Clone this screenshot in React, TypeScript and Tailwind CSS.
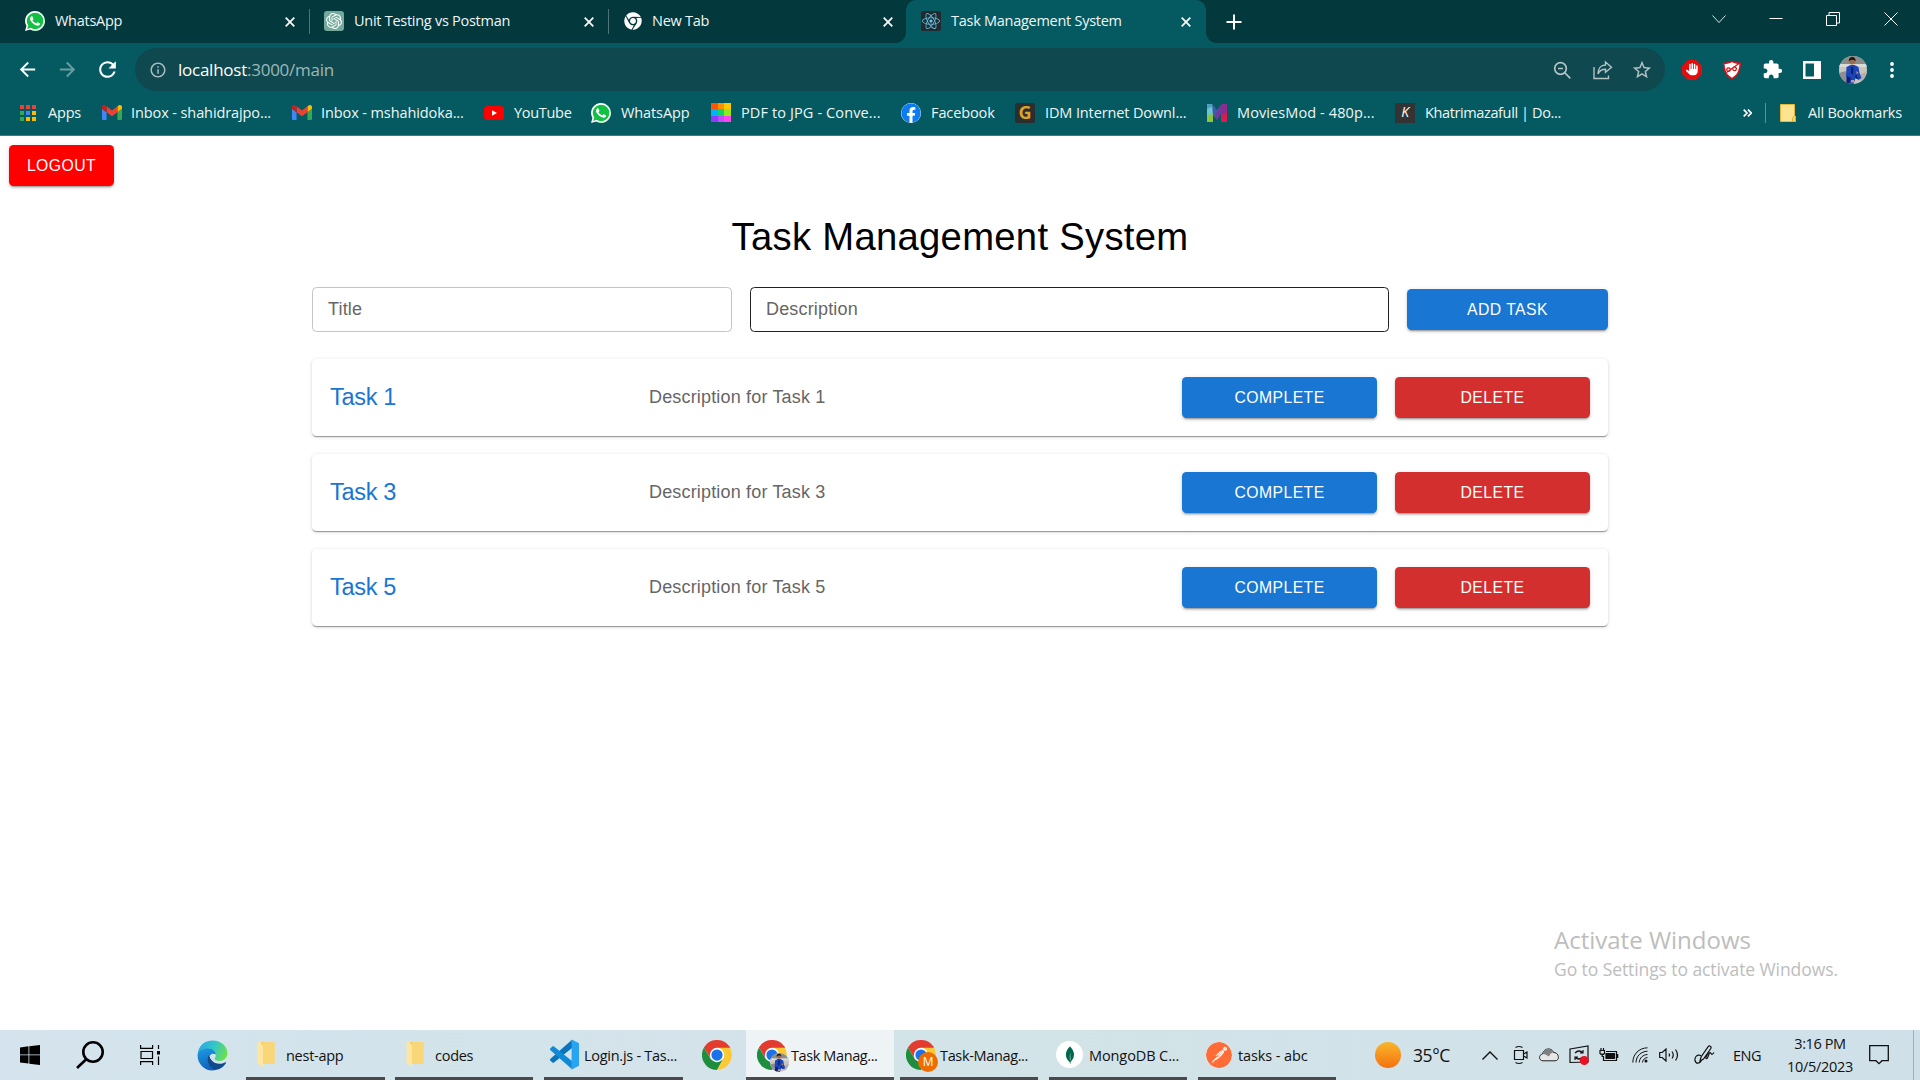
import type { ReactNode } from "react";
import { FaReact, FaChrome, FaFacebook } from "react-icons/fa";
import { FaHand } from "react-icons/fa6";
import { SiWhatsapp, SiOpenai, SiMongodb, SiPostman } from "react-icons/si";
import { MdArrowBack, MdArrowForward, MdExtension, MdInfoOutline, MdRefresh, MdStarBorder } from "react-icons/md";

/* ---------- logos ---------- */

function WhatsAppLogo() {
  return (
    <span className="grid size-5 shrink-0 place-items-center rounded-full bg-[#12c143]">
      <SiWhatsapp className="size-5 text-white" />
    </span>
  );
}

function GmailLogo() {
  return (
    <svg viewBox="0 0 24 18" className="h-[15px] w-5 shrink-0">
      <path d="M0 2.5V16.4C0 17.3.7 18 1.6 18H5.5V8.7L0 4.5z" fill="#4285f4" />
      <path d="M18.5 18h3.9c.9 0 1.6-.7 1.6-1.6V4.5l-5.5 4.2z" fill="#34a853" />
      <path d="M18.5 1.6v7.1L24 4.6V2.5c0-2-2.300-3.200-3.900-2z" fill="#fbbc04" />
      <path d="M5.500 8.700V1.600L12 6.500l6.500-4.900v7.100L12 13.600z" fill="#ea4335" />
      <path d="M0 2.500v2.100l5.500 4.100V1.600L3.900.5C2.300-.7 0 .5 0 2.500z" fill="#c5221f" />
    </svg>
  );
}

function AppsIcon() {
  const cells = ["bg-[#ea4335]", "bg-[#ea4335]", "bg-[#ea4335]", "bg-[#34a853]", "bg-[#4285f4]", "bg-[#fbbc04]", "bg-[#34a853]", "bg-[#fbbc04]", "bg-[#fbbc04]"];
  return (
    <span className="grid grid-cols-3 gap-x-[2px] gap-y-[2px]">
      {cells.map((c, i) => (
        <span key={i} className={`size-1 ${c}`} />
      ))}
    </span>
  );
}

function YouTubeLogo() {
  return (
    <svg viewBox="0 0 20 14" className="h-[14px] w-5 shrink-0">
      <rect width="20" height="14" rx="3.500" fill="#f00" />
      <path d="M8 4.200v5.600L13 7z" fill="#fff" />
    </svg>
  );
}

function PdfLogo() {
  const cells = ["bg-[#ff5500]", "bg-[#ff9100]", "bg-[#ffc800]", "bg-[#00b4f5]", "bg-[#0fd56b]", "bg-[#93e81c]", "bg-[#8b3dff]", "bg-[#c04bff]", "bg-[#ff46ee]"];
  return (
    <span className="grid size-5 grid-cols-3 grid-rows-3">
      {cells.map((c, i) => (
        <span key={i} className={c} />
      ))}
    </span>
  );
}

function MoviesLogo() {
  return (
    <svg viewBox="0 0 20 18" className="h-[18px] w-5 shrink-0">
      <path d="M0 0h5l3 4v9l-2-2v7H0z" fill="#4d9fc0" />
      <path d="M0 5l6-3v9H0z" fill="#6cc5d0" />
      <path d="M0 11l6-1v8H0z" fill="#8cc63f" />
      <path d="M5 0l5 6 5-6v8l-5 8-4-5z" fill="#3d5ba9" />
      <path d="M10 6l5-6h3l-4 9-4 7-2-3z" fill="#6a3c9b" />
      <path d="M14 7l6-6v17h-6z" fill="#d81b50" />
      <path d="M15 0h5v8l-6 3z" fill="#8a2d8e" />
    </svg>
  );
}

function FolderIcon() {
  return (
    <svg viewBox="0 0 16 18" className="h-[18px] w-4 shrink-0">
      <path d="M.5.5h14v11l1 .8v5.200H.5z" fill="#ffe48f" stroke="#e6b93c" />
      <path d="M12.500 17.500v-3.500l2-2.500 1 1v5z" fill="#ffd75e" stroke="#dca92a" strokeWidth=".8" />
    </svg>
  );
}

function ChromeLogo({ children }: { children?: ReactNode }) {
  return (
    <span className="relative size-[30px] shrink-0">
      <svg viewBox="0 0 48 48" className="size-[30px]">
        <path d="M24 12.500H45L43 9H6L3.200 12l10.900 18L24 24z" fill="#e33b2e" />
        <path d="M24 24L3.200 12A24 24 0 0 1 44.800 12z" fill="#e33b2e" />
        <path d="M3.200 12L14 30.200 24 35.500 33.800 30.200 24 48A24 24 0 0 1 3.200 12z" fill="#1e8e3e" />
        <path d="M33.900 30L24 48A24 24 0 0 0 44.800 12.500H24z" fill="#fcc934" />
        <circle cx="24" cy="24" r="11.500" fill="#fff" />
        <circle cx="24" cy="24" r="9" fill="#1a73e8" />
      </svg>
      {children}
    </span>
  );
}

function Portrait({ className }: { className: string }) {
  return (
    <svg viewBox="0 0 28 28" className={className}>
      <defs>
        <clipPath id="face-clip">
          <circle cx="14" cy="14" r="14" />
        </clipPath>
      </defs>
      <g clipPath="url(#face-clip)">
        <rect width="28" height="28" fill="#c9c6c2" />
        <path d="M0 0h28v8H0z" fill="#8b8d8a" />
        <path d="M0 8h28v3H0z" fill="#dcdad6" />
        <path d="M0 17l7-2 3 13H0z" fill="#8f8d93" />
        <path d="M21 18l7-2v12h-7z" fill="#b6b0aa" />
        <path d="M7.500 11l4-2h4l4 2 1 6 2 5-3 2-3-2-2 6H9l-2-8z" fill="#1c46b8" />
        <path d="M12 11h2.500l-.5 8-2-2zM8 20l4 2-2 6H7zM17 18l2 5-3-1z" fill="#0b2070" />
        <circle cx="13.200" cy="5.500" r="3" fill="#9b6b50" />
        <path d="M9.800 5.500c-.6-6 7.400-6 6.900 0-1-2.500-5.500-2.500-6.900 0z" fill="#17130f" />
        <path d="M12 24h3v2.500h-3zM17.500 15l2 2-2 1z" fill="#c99a7c" />
      </g>
    </svg>
  );
}

function EdgeLogo() {
  return (
    <svg viewBox="0 0 32 32" className="size-[31px]">
      <defs>
        <linearGradient id="edge-top" x1="0" y1=".3" x2="1" y2=".6">
          <stop offset="0" stopColor="#2aa7e0" />
          <stop offset=".5" stopColor="#33c6c8" />
          <stop offset="1" stopColor="#6fe04a" />
        </linearGradient>
        <linearGradient id="edge-left" x1="0" y1="0" x2=".3" y2="1">
          <stop offset="0" stopColor="#1f9be4" />
          <stop offset="1" stopColor="#0f63bd" />
        </linearGradient>
      </defs>
      <path d="M.8 14C1.600 6 8 .6 16 .6c9 0 15.400 6 15.400 13 0 5-4 8-8.400 8-3 0-4.800-1-4.800-2.200 0-1 1.300-1.500 1.300-3.900 0-3-3-5.500-7-5.500C6 10 .8 14 .8 14z" fill="url(#edge-top)" />
      <path d="M.6 16C.6 11 6 8.800 11 8.800c5 0 8.500 3 8.500 6.500-2-2.300-7.500-1-7.500 5 0 5 4 9.500 8 10.500-9 3-19.400-4-19.400-14.800z" fill="url(#edge-left)" />
      <path d="M12.500 15.500C9 20 12 28 18.500 31c5-.3 9-3.300 11.300-7 .4-.7-.2-1.200-1-.8-1.800 1-4 1.400-5.800 1.300-6-.2-9.500-4-10.500-9z" fill="#114a8b" />
    </svg>
  );
}

function VsCodeLogo() {
  return (
    <svg viewBox="0 0 32 32" className="size-[31px] shrink-0">
      <path d="M23.500 1L1.500 20.500a1.300 1.300 0 0 0 0 2l2 1.700c.5.400 1.200.4 1.700 0L24 9z" fill="#0a74bd" />
      <path d="M23.500 31L1.500 11.500a1.300 1.300 0 0 1 0-2l2-1.700c.5-.4 1.200-.4 1.700 0L24 23z" fill="#0f8ad6" />
      <path d="M22 1.500Q23 .4 24.500 1L31 4.300v23.400L24.500 31q-1.500.6-2.500-.5 1.300.2 1.300-1.300V2.800Q23.300 1.300 22 1.500z" fill="#29a4f0" />
    </svg>
  );
}

function ExplorerFolder() {
  return (
    <svg viewBox="0 0 18 27" className="h-[27px] w-[18px] shrink-0">
      <path d="M3 1h14v22H5z" fill="#f0c65c" />
      <path d="M6 1h11a.8.8 0 0 1 .8.8V23H6z" fill="#f9d778" />
      <path d="M.5 1h3.500c1 2 2 3 2 5v20L.5 22z" fill="#ffe6a0" />
    </svg>
  );
}

/* ---------- browser chrome ---------- */

function CloseGlyph() {
  return (
    <svg viewBox="0 0 10 10" className="size-[10px] shrink-0" stroke="#fff" strokeWidth="1.700">
      <path d="M.7.7l8.600 8.600M9.300.7L.7 9.300" />
    </svg>
  );
}

function Tab({ icon, title, active, divider, className, gap = "w-[30px]" }: { icon: ReactNode; title: string; active?: boolean; divider?: boolean; className: string; gap?: string }) {
  return (
    <div className={`relative flex h-full items-center ${active ? "rounded-t-[10px] bg-[#045a60]" : ""} ${className}`}>
      {active && (
        <>
          <span className="absolute bottom-0 -left-[10px] size-[10px] bg-[radial-gradient(circle_at_0_0,transparent_9.5px,#045a60_10px)]" />
          <span className="absolute -right-[10px] bottom-0 size-[10px] bg-[radial-gradient(circle_at_100%_0,transparent_9.5px,#045a60_10px)]" />
        </>
      )}
      <div className={`flex items-center pb-px ${gap}`}>{icon}</div>
      <span className="grow pb-[2px] whitespace-nowrap">{title}</span>
      <CloseGlyph />
      {divider && <span className="ml-[14px] h-[25px] w-px bg-[#4c7478]" />}
    </div>
  );
}

function TabStrip() {
  return (
    <div className="flex h-[43px] items-center bg-[#03383d] text-[14.5px] tracking-[-0.27px] text-[#eef6f6]">
      <Tab className="w-[310px] pl-[25px]" icon={<WhatsAppLogo />} title="WhatsApp" divider />
      <Tab
        className="w-[299px] pl-[14px]"
        icon={
          <span className="grid size-5 place-items-center rounded-[3px] bg-[#74aa9c]">
            <SiOpenai className="size-4 text-white" />
          </span>
        }
        title="Unit Testing vs Postman"
        divider
      />
      <Tab className="w-[297px] pr-[13px] pl-[15px]" gap="w-7" icon={<FaChrome className="size-[18px] text-white" />} title="New Tab" />
      <Tab
        className="w-[300px] pr-[15px] pl-[15px]"
        icon={
          <span className="grid size-5 place-items-center rounded-[2px] bg-[#222a30]">
            <FaReact className="size-[18px] text-[#61c6e4]" />
          </span>
        }
        title="Task Management System"
        active
      />
      <svg viewBox="0 0 16 16" className="ml-5 size-4" stroke="#fff" strokeWidth="2">
        <path d="M8 0.500v15M.5 8h15" />
      </svg>
      <div className="mr-[22px] mb-[6px] ml-auto flex items-center">
        <svg viewBox="0 0 14 14" className="mr-[43px] size-[14px]" fill="none" stroke="#d8e4e4">
          <path d="M.5 3.500L7 10.500l6.500-7" />
        </svg>
        <svg viewBox="0 0 14 14" className="mr-[43px] size-[14px]" stroke="#fff">
          <path d="M.5 6.500h13" />
        </svg>
        <svg viewBox="0 0 14 14" className="mr-11 size-[14px]" fill="none" stroke="#fff">
          <path d="M.5 3.500h10v10H.5zM3 3.500V.5h10.500v10.500H10.500" />
        </svg>
        <svg viewBox="0 0 14 14" className="size-[14px]" stroke="#fff">
          <path d="M.5.5l13 13M13.500.5l-13 13" />
        </svg>
      </div>
    </div>
  );
}

function Toolbar() {
  return (
    <div className="flex h-[53px] items-center text-white">
      <div className="flex w-[135px] items-center gap-[17px] pl-4">
        <MdArrowBack className="size-[23px]" />
        <MdArrowForward className="size-[23px] text-[#6b9da0]" />
        <MdRefresh className="-ml-px size-[25px]" />
      </div>
      <div className="flex h-[43px] w-[1530px] items-center rounded-full bg-[#0f484e] pr-[12px] pl-[14px]">
        <MdInfoOutline className="size-[18px] text-[#a9bcc0]" />
        <span className="ml-[11px] grow text-[17px] tracking-[-0.25px] text-[#9db8bb]">
          <span className="text-white">localhost</span>:3000/main
        </span>
        <svg viewBox="0 0 18 18" className="size-[18px]" fill="none" stroke="#b4c3c5" strokeWidth="1.700">
          <circle cx="7.500" cy="7.500" r="5.800" />
          <path d="M11.500 11.500l5.800 5.800M5 7.500h5" />
        </svg>
        <svg viewBox="0 0 20 20" className="ml-[22px] size-5" fill="none" stroke="#b4c3c5" strokeWidth="1.400">
          <path d="M1 7v11.500h14.500v-3" />
          <path d="M12.500 2l6 5.200-6 5v-3C8.500 9.200 6.300 11 5 14c0-5.500 3-9 7.500-9z" />
        </svg>
        <MdStarBorder className="ml-[18px] size-[22px] text-[#b4c3c5]" />
      </div>
      <svg viewBox="0 0 20 20" className="ml-[17px] size-5">
        <path d="M6 0h8l6 6v8l-6 6H6l-6-6V6z" fill="#e40d0d" />
        <FaHand x="4" y="3" size="12.500" color="#fff" />
      </svg>
      <svg viewBox="0 0 20 20" className="ml-5 size-5">
        <path d="M10 .5c3 1.600 6 2 9 2-.2 8-2.500 14-9 17-6.500-3-8.800-9-9-17 3 0 6-.4 9-2z" fill="#d4141a" />
        <path d="M10 2.300c2.500 1.200 5 1.700 7.400 1.800-.4 6.500-2.300 11-7.400 13.700C4.900 15.100 3 10.600 2.600 4.100 5 4 7.500 3.500 10 2.300z" fill="#fff" />
        <path d="M4.500 12.500L17 3.500M6.500 7.800a1.800 1.800 0 1 0 .1 0zM12.500 7a1.800 1.800 0 1 0 .1 0z" fill="none" stroke="#d4141a" strokeWidth="1.300" />
      </svg>
      <MdExtension className="ml-[20px] size-[21px]" />
      <svg viewBox="0 0 18 18" className="ml-[20px] size-[18px]">
        <path d="M0 0h18v18H0zM2.500 2.500v13h8.500v-13z" fill="#fff" fillRule="evenodd" />
      </svg>
      <Portrait className="ml-[18px] size-7" />
      <svg viewBox="0 0 4 16" className="ml-[23px] h-4 w-1" fill="#fff">
        <circle cx="2" cy="2" r="1.900" />
        <circle cx="2" cy="8" r="1.900" />
        <circle cx="2" cy="14" r="1.900" />
      </svg>
    </div>
  );
}

function Bookmark({ icon, label, className, gap = "w-[30px]" }: { icon: ReactNode; label: string; className: string; gap?: string }) {
  return (
    <div className={`flex shrink-0 items-center whitespace-nowrap ${className}`}>
      <div className={`flex shrink-0 items-center ${gap}`}>{icon}</div>
      {label}
    </div>
  );
}

function BookmarksBar() {
  return (
    <div className="flex h-10 items-center border-b border-[#3b8085] pb-[6px] pl-5 text-[14.5px] tracking-[-0.1px] text-[#eef6f6]">
      <Bookmark className="w-[82px] tracking-[-0.2px]" gap="w-7" icon={<AppsIcon />} label="Apps" />
      <Bookmark className="w-[190px]" gap="w-[29px]" icon={<GmailLogo />} label="Inbox - shahidrajpo..." />
      <Bookmark className="w-[192px]" gap="w-[29px]" icon={<GmailLogo />} label="Inbox - mshahidoka..." />
      <Bookmark className="w-[107px] tracking-[-0.3px]" icon={<YouTubeLogo />} label="YouTube" />
      <Bookmark className="w-[120px]" icon={<WhatsAppLogo />} label="WhatsApp" />
      <Bookmark className="w-[190px] tracking-[0.12px]" icon={<PdfLogo />} label="PDF to JPG - Conve..." />
      <Bookmark className="w-[114px] tracking-[-0.1px]" icon={<FaFacebook className="size-5 rounded-full bg-white text-[#0d7cf2]" />} label="Facebook" />
      <Bookmark
        className="w-[192px] tracking-[-0.12px]"
        icon={<span className="grid size-5 place-items-center rounded-[2px] bg-[#2c2d2f] pb-[2px] text-[18px] leading-[18px] font-bold text-[#dda522]">G</span>}
        label="IDM Internet Downl..."
      />
      <Bookmark className="w-[188px] tracking-[0.1px]" icon={<MoviesLogo />} label="MoviesMod - 480p..." />
      <Bookmark
        className="w-[200px] tracking-[-0.38px]"
        icon={<span className="grid size-5 place-items-center bg-[#333] pb-px text-[14px] leading-[18px] text-white italic">K</span>}
        label="Khatrimazafull | Do..."
      />
      <div className="mr-[18px] ml-auto flex items-center tracking-[-0.2px]">
        <svg viewBox="0 0 9 8" className="mr-[13px] h-2 w-[9px]" fill="none" stroke="#fff" strokeWidth="1.700">
          <path d="M.7.6L4 4 .7 7.400M4.900.6L8.200 4 4.900 7.400" />
        </svg>
        <span className="mr-[14px] h-5 w-px bg-[#5d9093]" />
        <FolderIcon />
        <span className="ml-3">All Bookmarks</span>
      </div>
    </div>
  );
}

/* ---------- page ---------- */

const raised = "rounded-[4.5px] shadow-[0_3px_1px_-2px_rgba(0,0,0,0.2),0_2px_2px_0_rgba(0,0,0,0.14),0_1px_5px_0_rgba(0,0,0,0.12)]";

function Button({ label, className }: { label: string; className: string }) {
  return (
    <button className={`h-[41px] text-[15.75px] font-normal tracking-[0.45px] text-white uppercase ${raised} ${className}`}>{label}</button>
  );
}

function TaskCard({ title, description }: { title: string; description: string }) {
  return (
    <div className="flex h-[77px] items-center rounded-[4.5px] bg-white px-[18px] shadow-[0_2px_1px_-1px_rgba(0,0,0,0.25),0_1px_1px_0_rgba(0,0,0,0.16),0_1px_4px_0_rgba(0,0,0,0.14)]">
      <h2 className="w-[319px] text-[23.5px] tracking-[-0.3px] text-[#1976d2]">{title}</h2>
      <p className="grow text-[18px] tracking-[0.17px] text-[#666]">{description}</p>
      <div className="flex gap-[18px]">
        <Button label="Complete" className="w-[195px] bg-[#1976d2]" />
        <Button label="Delete" className="w-[195px] bg-[#d32f2f]" />
      </div>
    </div>
  );
}

function Page() {
  const tasks = [1, 3, 5];
  return (
    <main className="flex h-[894px] flex-col bg-white font-['Liberation_Sans',Arial,sans-serif]">
      <div className="px-[9px] pt-[9px]">
        <Button label="Logout" className="w-[105px] bg-[#f00]" />
      </div>
      <div className="mx-auto mt-[27px] w-[1296px]">
        <h1 className="text-center text-[38.25px] leading-[47px] tracking-[0.28px] text-black">Task Management System</h1>
        <div className="mt-[27px] flex items-center">
          <div className="flex h-[45px] w-[420px] items-center rounded-[4.5px] border border-[#c4c4c4] px-[15px] text-[18px] tracking-[0.17px] text-[#666]">Title</div>
          <div className="ml-[18px] flex h-[45px] w-[639px] items-center rounded-[4.5px] border border-[#212121] px-[15px] text-[18px] tracking-[0.17px] text-[#666]">Description</div>
          <Button label="Add Task" className="ml-[18px] w-[201px] bg-[#1976d2]" />
        </div>
        <div className="mt-[27px] flex flex-col gap-[18px]">
          {tasks.map((n) => (
            <TaskCard key={n} title={`Task ${n}`} description={`Description for Task ${n}`} />
          ))}
        </div>
      </div>
      <div className="mt-auto mb-[47px] ml-[1554px] font-['Open_Sans','Noto_Sans',sans-serif] text-[#bdbdbd]">
        <div className="pb-px text-[24px] leading-[31px]">Activate Windows</div>
        <div className="text-[17.5px] leading-[27px] tracking-[-0.08px]">Go to Settings to activate Windows.</div>
      </div>
    </main>
  );
}

/* ---------- taskbar ---------- */

function Task({ icon, label, active, className, gap }: { icon: ReactNode; label: string; active?: boolean; className: string; gap: string }) {
  return (
    <div className={`flex h-full shrink-0 items-center border-b-[3px] border-[#4a4a4c] whitespace-nowrap ${active ? "bg-[#eef4f6]" : ""} ${className}`}>
      <div className={`flex shrink-0 items-center pt-[2px] ${gap}`}>{icon}</div>
      <span className="pt-[4px]">{label}</span>
    </div>
  );
}

function Tray() {
  return (
    <div className="flex h-full items-center">
      <svg viewBox="0 0 16 9" className="h-[9px] w-4" fill="none" stroke="#111" strokeWidth="1.400">
        <path d="M.5 8.500L8 1l7.500 7.500" />
      </svg>
      <svg viewBox="0 0 16 20" className="ml-[15px] h-5 w-4" fill="none" stroke="#111" strokeWidth="1.200">
        <path d="M1.500 5.500h9v9h-9zM10.500 9l3.500-2v6l-3.500-2M2.500 2.500q3.500-2 7 0M2.500 17.500q3.500 2 7 0" />
      </svg>
      <svg viewBox="0 0 20 14" className="ml-[10px] h-[14px] w-5">
        <path d="M4 12.800C-.5 12.800-.5 6.500 3.500 6 5-.5 13-.5 14.500 4.500c6 0 6.500 8.300 1.500 8.300z" fill="#e6e6e6" stroke="#222" />
        <path d="M3.500 6C5-.5 13-.5 14.500 4.500 12.500 4.500 11 6 10 8.500L6 6.200z" fill="#808080" />
      </svg>
      <svg viewBox="0 0 20 20" className="ml-[10px] size-5" fill="none" stroke="#111" strokeWidth="1.200">
        <path d="M1 4l18-3v16L1 17.500z" />
        <path d="M6 8q4-4 8 0M14 5v3h-3M14 12q-4 4-8 0M6 15v-3h3" />
        <circle cx="15.300" cy="15.500" r="4.500" fill="#e81123" stroke="none" />
      </svg>
      <svg viewBox="0 0 20 14" className="ml-[10px] h-[14px] w-5" fill="none" stroke="#111" strokeWidth="1.200">
        <path d="M7 3.500h10.500v9H4.500V8M18.700 6v4M1 2.500h4.500v3q-2.200 2-4.500 0zM2 0v2.500M4.500 0v2.500M3.200 6.500V9" />
        <path d="M7 5.500h8.500v5H7z" fill="#111" />
      </svg>
      <svg viewBox="0 0 16 16" className="ml-[13px] size-4" fill="none" stroke="#111" strokeWidth="1">
        <path d="M.8 15.500C1 7 7 1 15.500.8M4 15.500C4.200 9 9 4.500 15.500 4.200M7.200 15.500c.3-4.500 3.800-7.800 8.300-8M10.500 15.500c.2-2.600 2.300-4.800 5-5" />
        <circle cx="14" cy="14" r="1.500" fill="#111" stroke="none" />
      </svg>
      <svg viewBox="0 0 21 14" className="ml-[11px] h-[14px] w-[21px]" fill="none" stroke="#111" strokeWidth="1.200">
        <path d="M.7 4.500h2.500L7 1v12L3.200 9.500H.7zM10 5.500q1 1.500 0 3M13 3.500q2.500 3.500 0 7M16.500 1.500q4 5.500 0 11" />
      </svg>
      <svg viewBox="0 0 21 20" className="ml-[14px] h-5 w-[21px]" fill="none" stroke="#111" strokeWidth="1.200">
        <path d="M7 10.500C3 9 .5 12 1 15.500c1 4 5 3 6.500 0M6 16l1-4L14 1.800q1-1.300 2.300-.5t.5 2.200L9.500 14zM14.500 7L12 12q-.5 2.500 1.500 1l1.500-4q1-2.500 2-.5t3-1" />
      </svg>
      <span className="ml-[18px] w-[50px] pt-[2px] text-[14.5px] tracking-[-0.5px]">ENG</span>
      <div className="w-[74px] text-center text-[14.5px] leading-[23px] tracking-[-0.27px]">
        <div className="tracking-[-0.4px]">3:16 PM</div>
        <div>10/5/2023</div>
      </div>
      <svg viewBox="0 0 20 20" className="ml-[12px] size-5" fill="none" stroke="#111" strokeWidth="1.300">
        <path d="M.7.7h18.600v15H13l-3 3-3-3H.7z" />
      </svg>
      <span className="ml-[24px] h-full w-px bg-[#9fb0b8]" />
    </div>
  );
}

function Taskbar() {
  return (
    <footer className="flex h-[50px] items-center bg-linear-to-r from-[#d4e3ed] via-[#d3e4e8] to-[#cfe0e9] text-[14.5px] tracking-[-0.27px] text-[#111]">
      <svg viewBox="0 0 20 20" className="ml-5 size-5 shrink-0" fill="#000">
        <path d="M0 2.500l8.500-1.200v8.200H0zM9.300 1.200L20 0v9.500H9.300zM0 10.300h8.500v8.300L0 17.500zM9.300 10.300H20V20L9.300 18.700z" />
      </svg>
      <svg viewBox="0 0 28 28" className="ml-9 size-7 shrink-0" fill="none" stroke="#000" strokeWidth="2.600">
        <circle cx="17" cy="11" r="9.700" />
        <path d="M10.500 18L1 27" />
      </svg>
      <svg viewBox="0 0 20 20" className="ml-9 size-5 shrink-0" fill="none" stroke="#000" strokeWidth="1.200">
        <path d="M.6 0v3.400h12V0M.6 20v-3.400h12V20M1 6.500h11.500v7H1zM18.500 0v4M18.500 11.500V20" />
        <path d="M17 6h3v3.500h-3z" fill="#000" stroke="none" />
      </svg>
      <div className="ml-[37px] w-[49px] shrink-0">
        <EdgeLogo />
      </div>
      <Task className="mr-[10px] w-[139px] pl-[11px]" gap="w-[29px]" icon={<ExplorerFolder />} label="nest-app" />
      <Task className="mr-[11px] w-[138px] pl-[11px]" gap="w-[29px]" icon={<ExplorerFolder />} label="codes" />
      <Task className="w-[139px] pl-[5px]" gap="w-[35px]" icon={<VsCodeLogo />} label="Login.js - Tas..." />
      <div className="flex w-[63px] shrink-0 items-center pl-[19px]">
        <ChromeLogo />
      </div>
      <Task
        className="mr-[6px] w-[148px] pl-[11px] tracking-[-0.4px]"
        gap="w-[34px]"
        active
        icon={
          <ChromeLogo>
            <Portrait className="absolute -right-[2px] -bottom-[2px] size-[19px]" />
          </ChromeLogo>
        }
        label="Task Manag..."
      />
      <Task
        className="mr-[11px] w-[138px] pl-[6px] tracking-[-0.35px]"
        gap="w-[34px]"
        icon={
          <ChromeLogo>
            <span className="absolute -right-[2px] -bottom-[2px] grid size-5 place-items-center rounded-full bg-[#ef6c00] text-[12px] text-white">M</span>
          </ChromeLogo>
        }
        label="Task-Manag..."
      />
      <Task
        className="mr-[11px] w-[138px] pl-[7px] tracking-[-0.1px]"
        gap="w-[33px]"
        icon={
          <span className="grid size-[27px] place-items-center rounded-full bg-white">
            <SiMongodb className="size-[18px] text-[#00684a]" />
          </span>
        }
        label="MongoDB C..."
      />
      <Task
        className="w-[138px] pl-[8px] tracking-[-0.1px]"
        gap="w-[32px]"
        icon={<SiPostman className="size-[26px] rounded-full bg-white text-[#ff6c37]" />}
        label="tasks - abc"
      />
      <span className="ml-[39px] size-[26px] shrink-0 rounded-full bg-linear-to-b from-[#f7b62a] to-[#f4700f]" />
      <span className="ml-3 w-[69px] shrink-0 pt-px text-[17.5px] tracking-[-0.4px]">35°C</span>
      <Tray />
    </footer>
  );
}

export default function App() {
  return (
    <div className="flex h-[1080px] w-[1920px] flex-col overflow-hidden bg-[#045a60] font-['Open_Sans','Noto_Sans',sans-serif]">
      <TabStrip />
      <Toolbar />
      <BookmarksBar />
      <Page />
      <Taskbar />
    </div>
  );
}
